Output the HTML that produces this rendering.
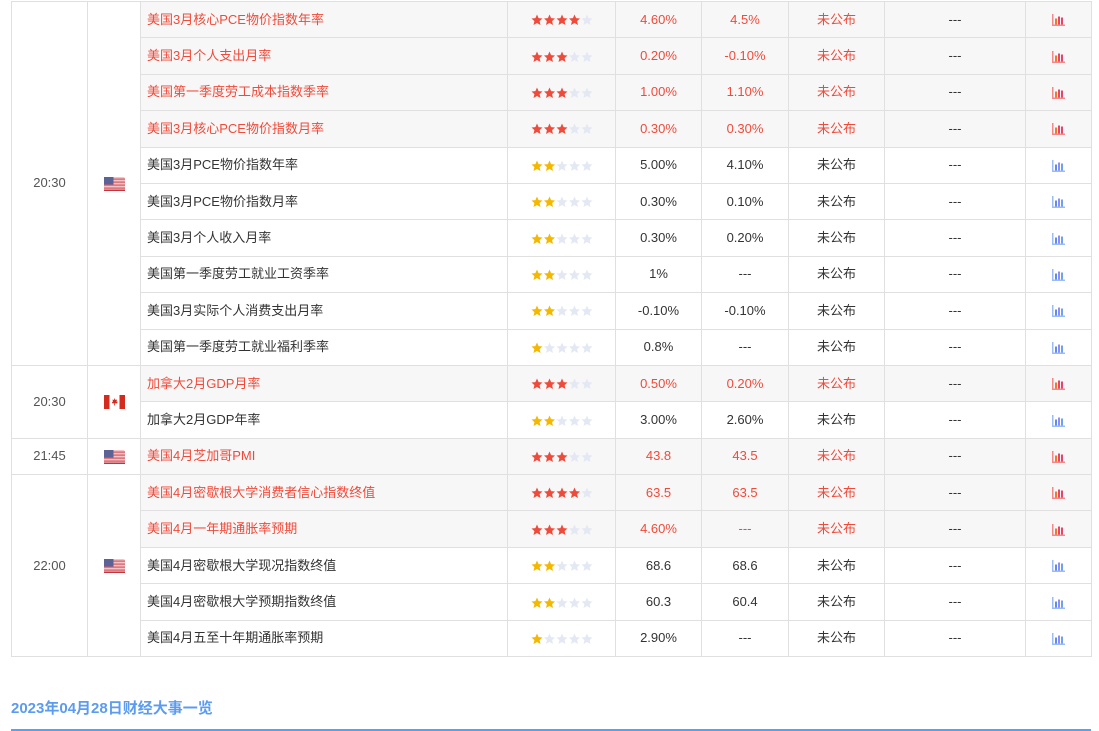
<!DOCTYPE html>
<html><head><meta charset="utf-8">
<style>
body{margin:0;background:#fff;width:1099px;height:731px;overflow:hidden;position:relative;font-family:"Liberation Sans","Noto Sans CJK SC",sans-serif;font-size:13px;color:#333}
table{position:absolute;left:11px;top:1px;border-collapse:collapse;table-layout:fixed;width:1080px}
td{border:1px solid #e0e0e0;height:35.4px;padding:0;text-align:center;vertical-align:middle;white-space:nowrap;line-height:16px}
td.n{text-align:left;padding-left:6px}
tr.r td.x{background:#f7f7f7;color:#f04a3a}
tr.r td.n{background:#f7f7f7;color:#f04a3a}
tr.r td.d{background:#f7f7f7;color:#333}
td.t{color:#555;font-size:13px;background:#fff}
.st svg{display:inline-block;vertical-align:middle}
h3{position:absolute;left:11px;top:697px;margin:0;font-size:15px;color:#5b9bf0;font-weight:bold}
.line{position:absolute;left:11px;top:729px;width:1080px;height:2px;background:#5aa0f5}
.ch{display:inline-block;vertical-align:middle}
</style></head><body>
<svg width="0" height="0" style="position:absolute">
<defs>
<symbol id="s" viewBox="0 0 12 12"><path d="M6 0.5l1.6 3.6 3.9.4-2.9 2.6.9 3.9L6 9l-3.5 2 .9-3.9L.5 4.5l3.9-.4z"/></symbol>
</defs></svg>
<table>
<colgroup><col style="width:76px"><col style="width:53px"><col style="width:367px"><col style="width:108px"><col style="width:86px"><col style="width:87px"><col style="width:96px"><col style="width:141px"><col style="width:66px"></colgroup>
<tr class="r"><td class="t" rowspan="10">20:30</td><td class="t f" rowspan="10">US</td><td class="n">美国3月核心PCE物价指数年率</td><td class="x st" data-n="4"></td><td class="x">4.60%</td><td class="x">4.5%</td><td class="x">未公布</td><td class="d">---</td><td class="x c"></td></tr>
<tr class="r"><td class="n">美国3月个人支出月率</td><td class="x st" data-n="3"></td><td class="x">0.20%</td><td class="x">-0.10%</td><td class="x">未公布</td><td class="d">---</td><td class="x c"></td></tr>
<tr class="r"><td class="n">美国第一季度劳工成本指数季率</td><td class="x st" data-n="3"></td><td class="x">1.00%</td><td class="x">1.10%</td><td class="x">未公布</td><td class="d">---</td><td class="x c"></td></tr>
<tr class="r"><td class="n">美国3月核心PCE物价指数月率</td><td class="x st" data-n="3"></td><td class="x">0.30%</td><td class="x">0.30%</td><td class="x">未公布</td><td class="d">---</td><td class="x c"></td></tr>
<tr><td class="n">美国3月PCE物价指数年率</td><td class="st" data-n="2"></td><td>5.00%</td><td>4.10%</td><td>未公布</td><td>---</td><td class="c"></td></tr>
<tr><td class="n">美国3月PCE物价指数月率</td><td class="st" data-n="2"></td><td>0.30%</td><td>0.10%</td><td>未公布</td><td>---</td><td class="c"></td></tr>
<tr><td class="n">美国3月个人收入月率</td><td class="st" data-n="2"></td><td>0.30%</td><td>0.20%</td><td>未公布</td><td>---</td><td class="c"></td></tr>
<tr><td class="n">美国第一季度劳工就业工资季率</td><td class="st" data-n="2"></td><td>1%</td><td>---</td><td>未公布</td><td>---</td><td class="c"></td></tr>
<tr><td class="n">美国3月实际个人消费支出月率</td><td class="st" data-n="2"></td><td>-0.10%</td><td>-0.10%</td><td>未公布</td><td>---</td><td class="c"></td></tr>
<tr><td class="n">美国第一季度劳工就业福利季率</td><td class="st" data-n="1"></td><td>0.8%</td><td>---</td><td>未公布</td><td>---</td><td class="c"></td></tr>
<tr class="r"><td class="t" rowspan="2">20:30</td><td class="t f" rowspan="2">CA</td><td class="n">加拿大2月GDP月率</td><td class="x st" data-n="3"></td><td class="x">0.50%</td><td class="x">0.20%</td><td class="x">未公布</td><td class="d">---</td><td class="x c"></td></tr>
<tr><td class="n">加拿大2月GDP年率</td><td class="st" data-n="2"></td><td>3.00%</td><td>2.60%</td><td>未公布</td><td>---</td><td class="c"></td></tr>
<tr class="r"><td class="t">21:45</td><td class="t f">US</td><td class="n">美国4月芝加哥PMI</td><td class="x st" data-n="3"></td><td class="x">43.8</td><td class="x">43.5</td><td class="x">未公布</td><td class="d">---</td><td class="x c"></td></tr>
<tr class="r"><td class="t" rowspan="5">22:00</td><td class="t f" rowspan="5">US</td><td class="n">美国4月密歇根大学消费者信心指数终值</td><td class="x st" data-n="4"></td><td class="x">63.5</td><td class="x">63.5</td><td class="x">未公布</td><td class="d">---</td><td class="x c"></td></tr>
<tr class="r"><td class="n">美国4月一年期通胀率预期</td><td class="x st" data-n="3"></td><td class="x">4.60%</td><td class="x">---</td><td class="x">未公布</td><td class="d">---</td><td class="x c"></td></tr>
<tr><td class="n">美国4月密歇根大学现况指数终值</td><td class="st" data-n="2"></td><td>68.6</td><td>68.6</td><td>未公布</td><td>---</td><td class="c"></td></tr>
<tr><td class="n">美国4月密歇根大学预期指数终值</td><td class="st" data-n="2"></td><td>60.3</td><td>60.4</td><td>未公布</td><td>---</td><td class="c"></td></tr>
<tr><td class="n">美国4月五至十年期通胀率预期</td><td class="st" data-n="1"></td><td>2.90%</td><td>---</td><td>未公布</td><td>---</td><td class="c"></td></tr>
</table>
<h3>2023年04月28日财经大事一览</h3>
<div class="line"></div>
<script>
var US='<svg width="21" height="14" viewBox="0 0 21 14" style="vertical-align:middle"><rect width="21" height="14" rx="2" fill="#f2c4c8"/><rect y="1.5" width="21" height="1.2" fill="#d25a64"/><rect y="4.5" width="21" height="1.2" fill="#d25a64"/><rect y="7.5" width="21" height="1.2" fill="#d25a64"/><rect y="10.5" width="21" height="1.2" fill="#d25a64"/><rect y="12.6" width="21" height="1.4" fill="#c8323c"/><rect width="9.5" height="7.5" fill="#5d6296"/></svg>';
var CA='<svg width="21" height="14" viewBox="0 0 21 14" style="vertical-align:middle"><rect width="21" height="14" rx="1" fill="#fff"/><rect width="5.5" height="14" fill="#d52b1e"/><rect x="15.5" width="5.5" height="14" fill="#d52b1e"/><path d="M10.5 3l1 2 1.5-.5-.5 2.5 1.2-.4-.6 1.8H8.4l-.6-1.8 1.2.4-.5-2.5 1.5.5z" fill="#d52b1e"/><rect x="10.1" y="8.5" width=".8" height="2" fill="#d52b1e"/></svg>';
document.querySelectorAll('td.f').forEach(function(td){td.innerHTML=td.textContent=='US'?US:CA;});
document.querySelectorAll('td.c').forEach(function(td){
  var red=td.parentNode.className=='r';
  var a=red?'#f28a8a':'#9dbcf5',b=red?'#f07a2a':'#5b8ef0',c=red?'#e8436a':'#8f8ef0',d=red?'#e8436a':'#6fa0f5';
  td.innerHTML='<svg class="ch" width="13" height="12" viewBox="0 0 13 12"><rect x="0" y="0" width="1.5" height="12" fill="'+a+'"/><rect x="0" y="10.5" width="13" height="1.5" fill="'+a+'"/><rect x="3" y="4.5" width="2" height="6" fill="'+b+'"/><rect x="6" y="2.5" width="2" height="8" fill="'+c+'"/><rect x="9" y="3.5" width="2" height="7" fill="'+d+'"/></svg>';
});
document.querySelectorAll('td.st').forEach(function(td){
  var n=+td.getAttribute('data-n');var red=td.parentNode.className=='r';
  var h='<svg width="62" height="12" viewBox="0 0 62 12">';
  for(var i=0;i<5;i++){h+='<use href="#s" x="'+(i*12.5)+'" y="0" width="12" height="12" fill="'+(i<n?(red?'#ee4b3c':'#f5b800'):'#e3e8f3')+'"/>';}
  td.innerHTML=h+'</svg>';
});
</script>
</body></html>
